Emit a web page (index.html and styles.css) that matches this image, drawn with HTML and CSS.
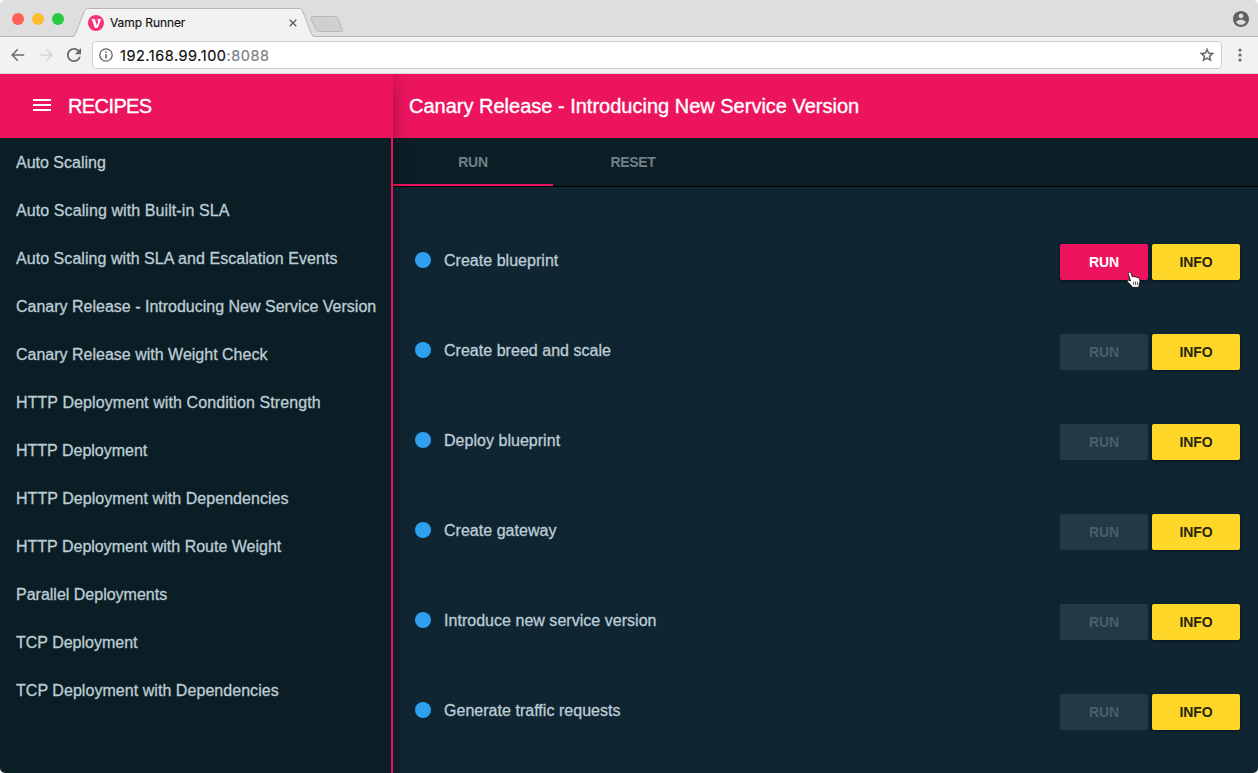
FILE: index.html
```html
<!DOCTYPE html>
<html lang="en">
<head>
<meta charset="utf-8">
<title>Vamp Runner</title>
<link rel="stylesheet" href="styles.css">
</head>
<body>
<div class="window">
  <header class="tabstrip">
    <div class="lights"><i class="light close"></i><i class="light min"></i><i class="light max"></i></div>
    <div class="tab">
      <svg class="tab-shape" width="246" height="30" viewBox="0 0 246 30"><path d="M0 28.500 C2 28.500 3 27 4 24.500 L12 4 C13 1.500 14 .5 17 .5 H226 C229 .5 230 1.500 231 4 L239 24.500 C240 27.500 241 28.500 243 28.500 V30 H0Z" fill="#f2f2f2"/><path d="M0 28.500 C2 28.500 3 27 4 24.500 L12 4 C13 1.500 14 .5 17 .5 H226 C229 .5 230 1.500 231 4 L239 24.500 C240 27.500 241 28.500 243 28.500" fill="none" stroke="#b5b5b5"/></svg>
      <svg class="favicon" width="16" height="16" viewBox="0 0 16 16"><circle cx="8" cy="8" r="8" fill="#fb3079"/><path d="M2.800 4H6.800L8.900 10.500L10.200 7L9.300 4H13.200L9.700 13H6.900L3.900 4.800Z" fill="#fff"/></svg>
      <span class="tab-title">Vamp Runner</span>
      <svg class="tab-close" width="8" height="8" viewBox="0 0 8 8"><path d="M.7 .7L7.300 7.300M7.300 .7L.7 7.300" stroke="#5a5a5a" stroke-width="1.300"/></svg>
    </div>
    <svg class="new-tab" width="34" height="18" viewBox="0 0 34 18"><path d="M3 .5H24C26 .5 27 1 28 3L32.500 14C33 15.500 32.500 15.500 31 15.500H9.500C7.500 15.500 6.500 15 6 13.500L1 3C.5 1.500 1 .5 3 .5Z" fill="#d0d0d0" stroke="#b8b8b8"/></svg>
    <svg class="user" width="16" height="16" viewBox="2 2 20 20"><path fill="#616161" d="M12 2C6.480 2 2 6.480 2 12s4.480 10 10 10 10-4.480 10-10S17.520 2 12 2zm0 3c1.660 0 3 1.340 3 3s-1.340 3-3 3-3-1.340-3-3 1.340-3 3-3zm0 14.200c-2.500 0-4.710-1.280-6-3.220.03-1.990 4-3.080 6-3.080 1.990 0 5.970 1.090 6 3.080-1.290 1.940-3.500 3.220-6 3.220z"/></svg>
  </header>
  <div class="toolbar">
    <svg class="nav back" width="14" height="14" viewBox="0 0 14 14"><path d="M13.200 7H1.500M6.800 1.300L1.200 7L6.800 12.700" fill="none" stroke="#686868" stroke-width="1.500"/></svg>
    <svg class="nav fwd" width="14" height="14" viewBox="0 0 14 14"><path d="M.8 7H12.500M7.200 1.300L12.800 7L7.200 12.700" fill="none" stroke="#d4d4d4" stroke-width="1.500"/></svg>
    <svg class="nav reload" width="14" height="14" viewBox="4 4 16 16"><path fill="#686868" d="M17.650 6.350C16.200 4.900 14.210 4 12 4c-4.420 0-7.990 3.580-7.990 8s3.570 8 7.990 8c3.730 0 6.840-2.550 7.730-6h-2.080c-.82 2.330-3.040 4-5.650 4-3.310 0-6-2.690-6-6s2.690-6 6-6c1.660 0 3.140.69 4.220 1.780L13 11h7V4z"/></svg>
    <div class="address">
      <svg width="14" height="14" viewBox="0 0 14 14"><circle cx="7" cy="7" r="6.200" fill="none" stroke="#606060" stroke-width="1.300"/><path d="M7 6V10.500M7 3.500V5" stroke="#606060" stroke-width="1.500"/></svg>
      <span class="url">192.168.99.100<span class="port">:8088</span></span>
      <svg class="star" width="14" height="14" viewBox="2 2 20 20"><path fill="#606060" stroke="#606060" stroke-width=".5" d="M22 9.240l-7.190-.62L12 2 9.190 8.630 2 9.240l5.460 4.730L5.820 21 12 17.270 18.180 21l-1.630-7.030zM12 15.400l-3.760 2.270 1-4.280-3.320-2.880 4.380-.38L12 6.100l1.710 4.040 4.380.38-3.320 2.880 1 4.280z"/></svg>
    </div>
    <svg class="dots" width="4" height="14" viewBox="0 0 4 14" fill="#686868"><circle cx="2" cy="2" r="1.600"/><circle cx="2" cy="7" r="1.600"/><circle cx="2" cy="12" r="1.600"/></svg>
  </div>
  <div class="app">
    <aside class="sidebar">
      <div class="side-head"><svg width="18" height="12" viewBox="0 0 18 12"><path d="M0 1H18M0 6H18M0 11H18" stroke="#fff" stroke-width="2"/></svg><h1 class="heading recipes">RECIPES</h1></div>
      <nav class="recipe-list">
        <a class="recipe">Auto Scaling</a>
        <a class="recipe wide">Auto Scaling with Built-in SLA</a>
        <a class="recipe wide-s">Auto Scaling with SLA and Escalation Events</a>
        <a class="recipe">Canary Release - Introducing New Service Version</a>
        <a class="recipe">Canary Release with Weight Check</a>
        <a class="recipe wide">HTTP Deployment with Condition Strength</a>
        <a class="recipe">HTTP Deployment</a>
        <a class="recipe wide-s">HTTP Deployment with Dependencies</a>
        <a class="recipe">HTTP Deployment with Route Weight</a>
        <a class="recipe">Parallel Deployments</a>
        <a class="recipe">TCP Deployment</a>
        <a class="recipe wide-s">TCP Deployment with Dependencies</a>
      </nav>
    </aside>
    <main class="main">
      <div class="main-head"><h2 class="heading">Canary Release - Introducing New Service Version</h2></div>
      <div class="tabs"><div class="mtab active">RUN</div><div class="mtab">RESET</div></div>
      <div class="steps">
        <div class="step"><i class="dot"></i><span class="step-name">Create blueprint</span><button class="btn run">RUN</button><button class="btn info">INFO</button></div>
        <div class="step"><i class="dot"></i><span class="step-name">Create breed and scale</span><button class="btn off">RUN</button><button class="btn info">INFO</button></div>
        <div class="step"><i class="dot"></i><span class="step-name">Deploy blueprint</span><button class="btn off">RUN</button><button class="btn info">INFO</button></div>
        <div class="step"><i class="dot"></i><span class="step-name">Create gateway</span><button class="btn off">RUN</button><button class="btn info">INFO</button></div>
        <div class="step"><i class="dot"></i><span class="step-name">Introduce new service version</span><button class="btn off">RUN</button><button class="btn info">INFO</button></div>
        <div class="step"><i class="dot"></i><span class="step-name">Generate traffic requests</span><button class="btn off">RUN</button><button class="btn info">INFO</button></div>
      </div>
      <div class="edge-shadow"></div>
    </main>
  </div>
</div>
<svg class="cursor" width="16" height="18" viewBox="0 0 16 18"><path d="M3.200 1.200C4.200 .8 4.900 1.500 5.200 2.500L6.500 6C7 5.100 8.300 5.200 8.700 6.200C9.500 5.400 10.700 5.700 11 6.700C12 6.300 13.300 6.900 13.600 8C14.100 10 13.900 11.500 13.200 13L13 16.300H6.300C5.300 14.200 3.500 12.700 1.600 11C.6 10 1.500 8.500 3 9.200L4.500 10L2.400 3.200C2.100 2.200 2.400 1.500 3.200 1.200Z" fill="#fff" stroke="#111" stroke-width=".9"/><path d="M7.600 10.500V14M9.500 10.500V14M11.400 10.500V14" stroke="#111" stroke-width=".7"/></svg>
</body>
</html>
```
FILE: styles.css
```css
* { box-sizing: border-box; }
body { margin: 0; background: #fff; font-family: "Liberation Sans", Arial, sans-serif; overflow: hidden; }
svg { display: block; flex: none; }
.window { height: 773px; display: flex; flex-direction: column; border-radius: 5px; overflow: hidden; }
.tabstrip { height: 37px; flex: none; display: flex; background: #dedede; border-bottom: 1px solid #b5b5b5; align-items: flex-start; }
.lights { display: flex; gap: 8px; padding: 13px 0 0 12px; width: 72px; flex: none; }
.light { width: 12px; height: 12px; border-radius: 50%; }
.close { background: #ff5f57; }
.min { background: #ffbd2e; }
.max { background: #28ca42; }
.tab { position: relative; width: 246px; height: 30px; margin-top: 8px; margin-bottom: -2px; display: flex; align-items: center; padding: 0 21px 0 16px; flex: none; }
.tab-shape { position: absolute; left: 0; top: 0; }
.favicon, .tab-title, .tab-close { position: relative; }
.tab-title { font: 12px Inter, sans-serif; color: #111; margin-left: 6px; padding-bottom: 1px; flex: 1; -webkit-text-stroke: .15px #111; letter-spacing: -.08px; }
.new-tab { margin: 16px 0 0 -8px; }
.user { margin: 11px 9px 0 auto; }
.toolbar { height: 37px; flex: none; background: #f2f2f2; border-bottom: 1px solid #dcd5d8; display: flex; align-items: center; padding: 0 16px 0 11px; }
.fwd { margin-left: 14px; }
.reload { margin-left: 14px; }
.address { flex: 1; height: 28px; margin: 0 16px 0 11px; background: #fff; border: 1px solid #cfcfcf; border-radius: 4px; display: flex; align-items: center; padding: 0 7px 0 6px; }
.url { flex: 1; margin-left: 7px; font: 14.5px Inter, sans-serif; letter-spacing: .54px; color: #111; -webkit-text-stroke: .2px; }
.port { color: #808080; }
.app { flex: 1; display: flex; min-height: 0; }
.sidebar { width: 393px; flex: none; display: flex; flex-direction: column; background: #0c1e25; }
.side-head { height: 64px; flex: none; background: #ed145f; display: flex; align-items: center; padding: 0 0 2px 33px; gap: 17px; }
.heading { margin: 0; font-size: 20px; font-weight: 400; color: #fff; line-height: 24px; -webkit-text-stroke: .35px #fff; white-space: nowrap; }
.recipes { letter-spacing: -.6px; padding-top: 2px; }
.recipe-list { flex: 1; border-right: 2px solid #ed145f; padding-top: 1px; }
.recipe { display: block; height: 48px; line-height: 48px; padding-left: 16px; font-size: 16px; color: #bdcdd6; white-space: nowrap; -webkit-text-stroke: .3px #bdcdd6; }
.wide { letter-spacing: .09px; }
.wide-s { letter-spacing: .05px; }
.main { position: relative; flex: 1; background: #102532; overflow: hidden; }
.main-head { height: 64px; background: #ed145f; display: flex; align-items: center; padding: 0 16px; }
.tabs { height: 49px; background: #0c1e25; border-bottom: 1px solid #000; display: flex; }
.mtab { width: 160px; height: 48px; line-height: 48px; text-align: center; font-size: 14px; font-weight: 700; letter-spacing: -.3px; color: #6f8089; }
.active { border-bottom: 2px solid #ed145f; }
.steps { padding-top: 31px; }
.step { height: 90px; display: flex; align-items: center; padding: 0 18px 2px 22px; border-bottom: 1px solid #0e222e; }
.dot { width: 16px; height: 16px; border-radius: 50%; background: #2f9ff0; margin-bottom: 4px; }
.step-name { flex: 1; margin: 0 0 2px 13px; font-size: 16px; letter-spacing: .03px; color: #bdcdd6; -webkit-text-stroke: .3px #bdcdd6; }
.btn { width: 88px; height: 36px; border: 0; padding: 0; border-radius: 2px; font: 700 14px "Liberation Sans", Arial, sans-serif; letter-spacing: -.15px; margin-left: 4px; }
.run { background: #ed145f; color: #fff; box-shadow: 0 1px 3px rgba(0,0,0,.5); }
.info { background: #ffd729; color: #2a260d; box-shadow: 0 1px 3px rgba(0,0,0,.5); }
.off { background: #233945; color: #4b5e69; }
.edge-shadow { position: absolute; left: 0; top: 0; bottom: 0; width: 16px; background: linear-gradient(90deg, rgba(0,0,0,.17), rgba(0,0,0,.04) 60%, transparent); -webkit-mask-image: linear-gradient(rgba(0,0,0,.3), #000 24px); mask-image: linear-gradient(rgba(0,0,0,.3), #000 24px); }
.cursor { position: absolute; left: 1126px; top: 271px; }
```
